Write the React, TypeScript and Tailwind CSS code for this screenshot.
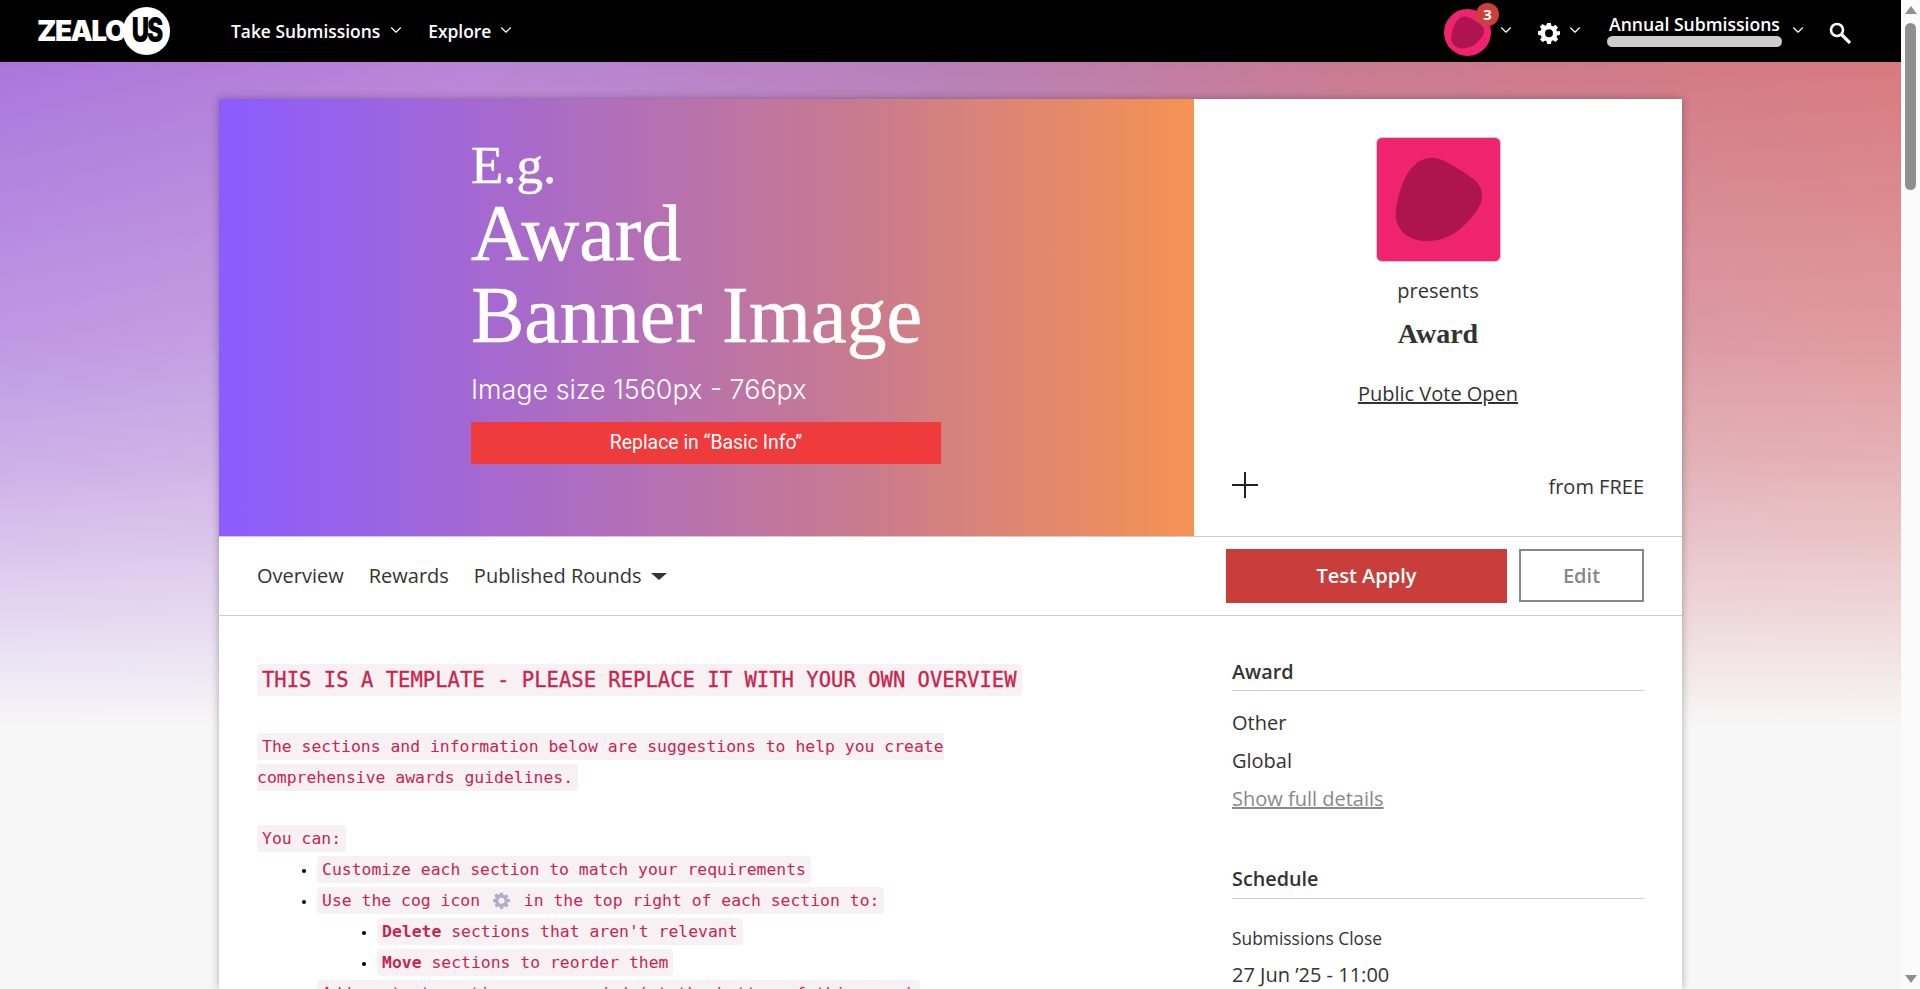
import { ChevronDown } from "lucide-react";

const Chevron = () => <ChevronDown className="w-[18px] h-[18px] -mt-[3px] text-white" strokeWidth={1.5} />;

const codeBox = "bg-[#f7f1f4] text-[#c7254e] rounded-[4px] px-[5px] py-[4px]";

const Gear = ({ className }: { className: string }) => (
  <svg viewBox="0 0 24 24" className={className} fill="currentColor">
    <path fillRule="evenodd" d="M10 1h4l.6 3.1 1.7.7 2.6-1.8 2.9 2.9-1.8 2.6.7 1.7L24 10v4l-3.1.6-.7 1.7 1.8 2.6-2.9 2.9-2.6-1.8-1.7.7L14 24h-4l-.6-3.1-1.7-.7-2.6 1.8-2.9-2.9 1.8-2.6-.7-1.7L0 14v-4l3.1-.6.7-1.7L2 5.1 5 2.2l2.6 1.8 1.7-.7L10 1Zm2 7a4.3 4.3 0 1 0 0 8.6A4.3 4.3 0 0 0 12 8Z" />
  </svg>
);

const Blob = ({ className }: { className: string }) => (
  <svg viewBox="0 0 124 124" className={className}>
    <path fill="#ae144f" d="M56 20c9 0 19 7 29 13 11 7 21 13 21 25 0 10-8 20-18 30-9 9-22 16-38 16-13 0-26-6-30-19-2-6-1-14 1-23 5-21 15-42 35-42Z" />
  </svg>
);

const Nav = () => (
  <header className="h-[62px] bg-black flex items-center text-white shrink-0">
    <div className="ml-[37px] flex items-center w-[133px] font-['Inter',sans-serif] font-black">
      <span className="text-[28px] tracking-[-1.5px] leading-none w-[86px] whitespace-nowrap">ZEALO</span>
      <span className="w-[47px] h-[48px] rounded-full bg-white text-black flex items-center justify-center text-[24px] tracking-[-2px] shrink-0">
        <span className="scale-y-[1.4]">US</span>
      </span>
    </div>
    <a className="ml-[61px] text-[17.4px] font-semibold">Take Submissions</a>
    <span className="ml-[7px]"><Chevron /></span>
    <a className="ml-[23px] text-[17.4px] font-semibold">Explore</a>
    <span className="ml-[6px]"><Chevron /></span>
    <div className="ml-auto flex items-center pr-[50px]">
      <div className="relative mt-[3px] w-[47px] h-[47px] rounded-full bg-[#f0246e] flex items-center justify-center">
        <Blob className="w-[47px] h-[47px]" />
        <span className="absolute -top-[6px] -right-[8px] w-[23px] h-[23px] rounded-full bg-[#cc3f3a] flex items-center justify-center text-[15px] font-bold">3</span>
      </div>
      <span className="ml-[6px]"><Chevron /></span>
      <Gear className="ml-[23px] mt-[3px] w-[22px] h-[22px] text-white" />
      <span className="ml-[6px]"><Chevron /></span>
      <div className="ml-[23px] w-[175px] mb-[2px] flex flex-col items-center">
        <span className="text-[17.6px] font-semibold leading-[23px]">Annual Submissions</span>
        <span className="w-full h-[11px] rounded-full bg-[#cccccc]" />
      </div>
      <span className="ml-[7px]"><Chevron /></span>
      <svg viewBox="0 0 22 22" className="ml-[22px] mt-[3px] w-[22px] h-[22px]" fill="none" stroke="white">
        <circle cx="8" cy="8" r="6" strokeWidth="2.6" />
        <path d="M12.5 12.5 21 21" strokeWidth="3.2" />
      </svg>
    </div>
  </header>
);

const Banner = () => (
  <div className="w-[975px] h-[437px] bg-[linear-gradient(to_right,#8b5cff,#c87a90_65%,#f59352)] pl-[252px] text-white shrink-0">
    <div className="font-['Liberation_Serif',serif] text-[53px] leading-[56px] pt-[38px] [-webkit-text-stroke:0.5px_white]">E.g.</div>
    <div className="font-['Liberation_Serif',serif] text-[80px] leading-[80px] [-webkit-text-stroke:0.6px_white]">Award</div>
    <div className="font-['Liberation_Serif',serif] text-[80px] leading-[80px] mt-[2px] [-webkit-text-stroke:0.6px_white]">Banner Image</div>
    <div className="font-['Inter',sans-serif] font-light text-[26.9px] leading-[32px] mt-[18px]">Image size 1560px - 766px</div>
    <div className="w-[470px] h-[42px] mt-[17px] bg-[#ef3b3b] flex items-center justify-center font-['Roboto',sans-serif] text-[19.4px]">Replace in “Basic Info”</div>
  </div>
);

const HeroSide = () => (
  <div className="flex-1 flex flex-col items-center pt-[38px] text-[#333333] px-[38px] text-[20px]">
    <div className="w-[125px] h-[125px] rounded-[6px] border border-[#cccccc] bg-[#f0246e] overflow-hidden">
      <Blob className="w-full h-full" />
    </div>
    <p className="mt-[15px] leading-[27px]">presents</p>
    <h1 className="mt-[15px] font-['Liberation_Serif',serif] font-bold text-[28px] leading-[30px]">Award</h1>
    <a className="mt-[31px] leading-[27px] underline">Public Vote Open</a>
    <div className="mt-auto mb-[36px] w-full flex items-center justify-between">
      <svg viewBox="0 0 26 26" className="w-[26px] h-[26px] -mt-[4px]" stroke="#222222" strokeWidth="2">
        <path d="M13 0v26M0 13h26" />
      </svg>
      <span className="leading-[27px]">from FREE</span>
    </div>
  </div>
);

const Tabs = () => (
  <div className="h-[80px] border-y border-[#cccccc] flex items-center pl-[38px] pr-[38px] text-[#333333] text-[20px]">
    <a>Overview</a>
    <a className="ml-[25px]">Rewards</a>
    <a className="ml-[25px]">Published Rounds</a>
    <span className="ml-[9px] w-0 h-0 border-x-[8px] border-x-transparent border-t-[7px] border-t-[#333333]" />
    <button className="ml-auto w-[281px] h-[54px] bg-[#c93d3a] text-white text-[20px] font-semibold">Test Apply</button>
    <button className="ml-[12px] w-[125px] h-[53px] -mt-[1px] border-2 border-[#888888] text-[#888888] text-[20px] font-semibold">Edit</button>
  </div>
);

const Overview = () => (
  <div className="w-[775px] font-['DejaVu_Sans_Mono',monospace] text-[16.42px] leading-[31px]">
    <h2 className="text-[20.55px] leading-[32px] mb-[35px] [-webkit-text-stroke:0.3px_#c7254e]"><span className={codeBox}>THIS IS A TEMPLATE - PLEASE REPLACE IT WITH YOUR OWN OVERVIEW</span></h2>
    <p className="w-[700px] mb-[30px]"><span className={codeBox}>The sections and information below are suggestions to help you create comprehensive awards guidelines.</span></p>
    <p><span className={codeBox}>You can:</span></p>
    <ul className="list-disc pl-[60px] marker:text-[14px]">
      <li><span className={codeBox}>Customize each section to match your requirements</span></li>
      <li>
        <span className={codeBox}>Use the cog icon <Gear className="inline w-[17px] h-[17px] mx-[3.5px] text-[#b4accb] align-[-3px]" /> in the top right of each section to:</span>
        <ul className="list-disc pl-[60px] marker:text-[14px]">
          <li><span className={codeBox}><b>Delete</b> sections that aren't relevant</span></li>
          <li><span className={codeBox}><b>Move</b> sections to reorder them</span></li>
        </ul>
      </li>
      <li><span className={codeBox}>Add content sections, as needed (at the bottom of this page)</span></li>
    </ul>
  </div>
);

const Sidebar = () => (
  <aside className="w-[412px] -mt-[5px] text-[#333333] text-[20px]">
    <h3 className="text-[19.8px] font-semibold leading-[26px] pb-[5px] border-b border-[#cccccc]">Award</h3>
    <p className="mt-[19px] leading-[26px]">Other</p>
    <p className="mt-[12px] leading-[26px]">Global</p>
    <a className="block mt-[12px] leading-[26px] text-[#888888] underline">Show full details</a>
    <h3 className="mt-[54px] text-[19.8px] font-semibold leading-[26px] pb-[6px] border-b border-[#cccccc]">Schedule</h3>
    <p className="mt-[27px] text-[17.4px] leading-[24px]">Submissions Close</p>
    <p className="mt-[12px] leading-[26px]">27 Jun ’25 - 11:00</p>
  </aside>
);

const Scrollbar = () => (
  <div className="w-[19px] shrink-0 bg-[#fbfbfb] flex flex-col items-center">
    <span className="mt-[6px] w-0 h-0 border-x-[6px] border-x-transparent border-b-[8px] border-b-[#8f8f8f]" />
    <span className="mt-[9px] w-[11px] h-[167px] rounded-full bg-[#8f8f8f]" />
    <span className="mt-auto mb-[6px] w-0 h-0 border-x-[6px] border-x-transparent border-t-[8px] border-t-[#8f8f8f]" />
  </div>
);

export default function App() {
  return (
    <div className="h-[989px] flex overflow-hidden font-['Open_Sans',sans-serif]">
      <div className="flex-1 flex flex-col min-w-0 bg-[#f7f7f7]">
        <Nav />
        <div className="flex-1 min-h-0 overflow-hidden pt-[37px] pl-[219px] bg-no-repeat bg-[linear-gradient(to_bottom,rgba(247,247,247,0)_0%,rgba(247,247,247,0.26)_40%,rgba(247,247,247,0.46)_60%,rgba(247,247,247,0.73)_80%,#f7f7f7_98%),linear-gradient(to_right,#ab76dc,#b985d6_25%,#b87fb6_50%,#ca7a90_72%,#d87a7f)] bg-[size:100%_680px]">
          <main className="w-[1463px] h-full bg-white shadow-[0_0_8px_rgba(0,0,0,0.3)]">
            <div className="flex h-[437px]">
              <Banner />
              <HeroSide />
            </div>
            <Tabs />
            <div className="flex justify-between pl-[38px] pr-[38px] pt-[48px]">
              <Overview />
              <Sidebar />
            </div>
          </main>
        </div>
      </div>
      <Scrollbar />
    </div>
  );
}
